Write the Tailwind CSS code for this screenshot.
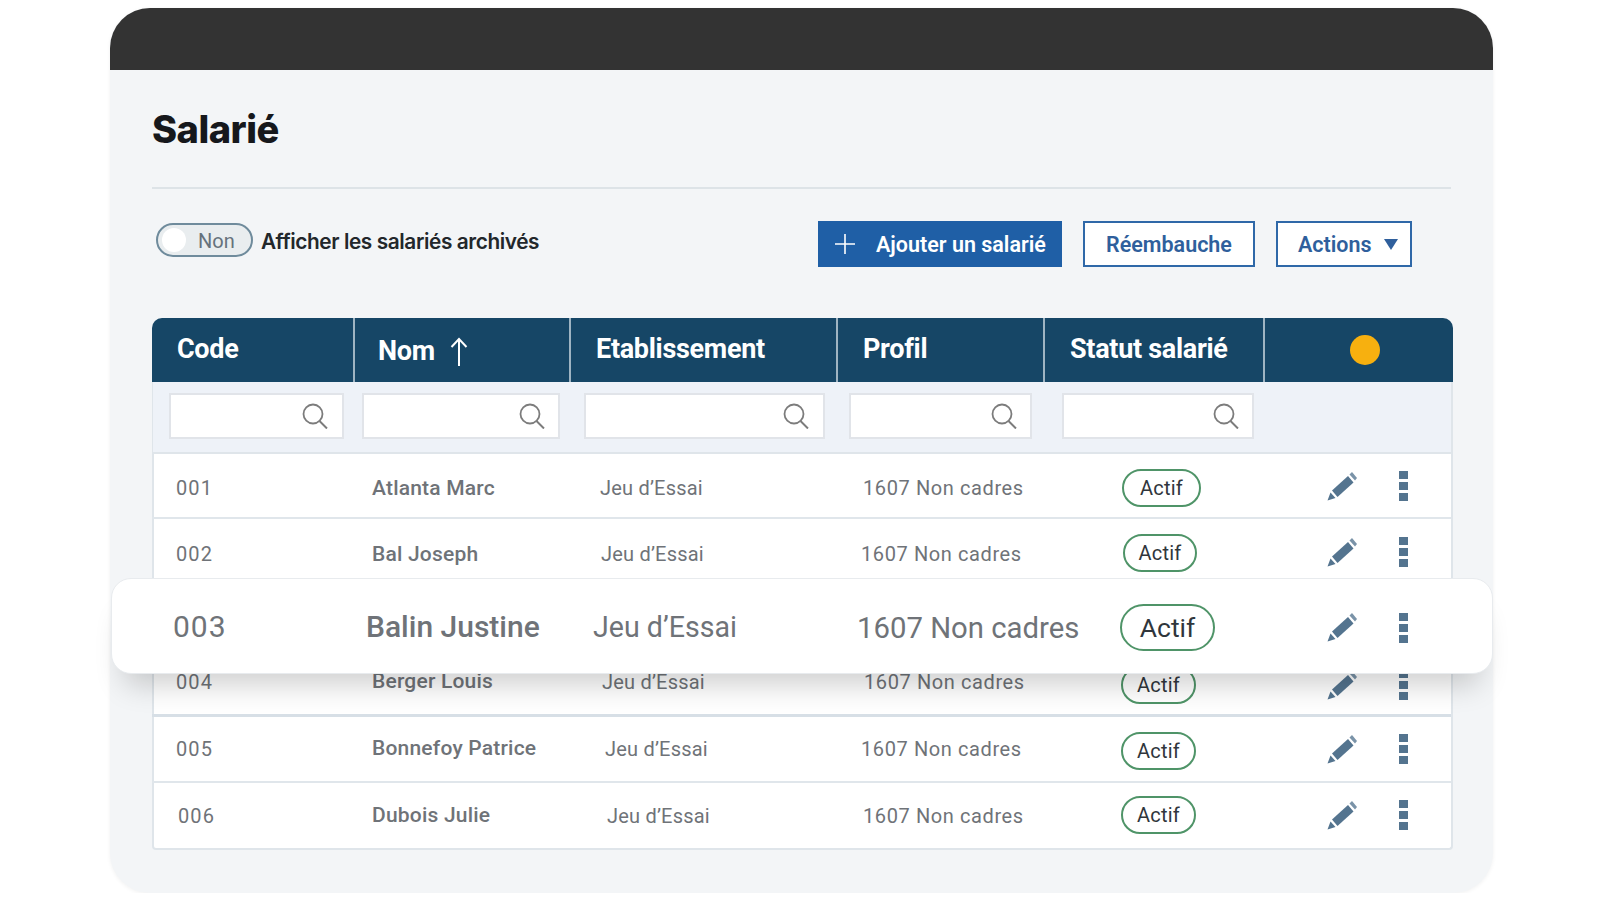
<!DOCTYPE html>
<html lang="fr">
<head>
    <meta charset="UTF-8">
    <title>Salarié</title>
    <script src="https://cdn.jsdelivr.net/npm/@tailwindcss/browser@4"></script>
</head>
<body class="bg-white font-['Roboto',sans-serif] overflow-hidden">
    <!-- Icons -->
    <svg class="hidden">
        <symbol id="pencil" viewBox="0 0 30 30">
            <polygon points="5,19.5 21,5 26.5,11.5 10.5,26" fill="#54748f"/>
            <polygon points="0.5,29.5 3.5,21.5 8.5,27" fill="#54748f"/>
            <polygon points="22.5,3.5 25,1 30,7 28,9.5" fill="#7a93a8"/>
        </symbol>
        <symbol id="search" viewBox="0 0 26 26">
            <circle cx="11" cy="11" r="9.5" fill="none" stroke="#7c7c7c" stroke-width="1.8"/>
            <line x1="17.5" y1="18" x2="25" y2="25.5" stroke="#7c7c7c" stroke-width="2"/>
        </symbol>
    </svg>

    <div class="relative mt-[8px] ml-[110px] w-[1383px] h-[885px] rounded-[40px] bg-[#f3f5f7] shadow-[0_1px_4px_rgba(0,0,0,0.06)]">
        <!-- Top bar -->
        <div class="h-[62px] rounded-t-[40px] bg-[#333333]"></div>

        <div class="px-[42px]">
            <h1 class="h-[119px] pt-[33px] font-['Inter',sans-serif] text-[38px] leading-[52px] font-extrabold tracking-[-0.5px] text-[#16181c] border-b-2 border-[#dde3e7]">Salarié</h1>

            <!-- Toolbar -->
            <div class="flex items-start justify-between h-[129px] pr-[39px]">
                <div class="flex items-center mt-[33px] ml-[4px]">
                    <div class="relative w-[97px] h-[34px] rounded-full border-2 border-[#6f8b9c] bg-[#e9edef] pl-[40px] pt-[3px] flex items-center text-[20px] text-[#66727c]">
                        Non
                        <span class="absolute left-[4px] top-[3px] w-[24px] h-[24px] rounded-full bg-white"></span>
                    </div>
                    <span class="ml-[8px] pt-[4px] font-['Inter',sans-serif] text-[20.8px] font-semibold tracking-[-0.4px] text-[#22272b]">Afficher les salariés archivés</span>
                </div>
                <div class="flex gap-[21px] mt-[32px] text-[21.5px] font-semibold">
                    <button class="flex items-center w-[244px] h-[46px] bg-[#1f5fa6] text-white pl-[17px]">
                        <svg class="w-[20px] h-[20px] mr-[21px]" viewBox="0 0 20 20"><path d="M10 0V20M0 10H20" stroke="#fff" stroke-width="1.6"/></svg>
                        <span class="pt-[3px]">Ajouter un salarié</span>
                    </button>
                    <button class="w-[172px] h-[46px] pt-[3px] bg-white border-2 border-[#2f68a8] text-[#2f5f9c]">Réembauche</button>
                    <button class="flex items-center w-[136px] h-[46px] bg-white border-2 border-[#2f68a8] text-[#2f5f9c] pl-[20px]">
                        <span class="pt-[3px]">Actions</span>
                        <svg class="w-[14px] h-[11px] ml-[12px]" viewBox="0 0 14 11"><polygon points="0,0 14,0 7,11" fill="#2f5f9c"/></svg>
                    </button>
                </div>
            </div>

            <!-- Table -->
            <div class="w-[1301px] h-[532px] rounded-t-[10px] rounded-b-[4px] bg-white border-x-2 border-b-2 border-[#dfe5ea]">
                <div class="grid grid-cols-[203px_216px_267px_207px_220px_184px] h-[64px] -mx-[2px] w-[1301px] rounded-t-[10px] bg-[#164666] text-white text-[27px] font-bold tracking-[-0.3px] items-center">
                    <div class="h-full flex items-center pl-[25px] pb-[2px] border-r-2 border-[#9fb4c2]">Code</div>
                    <div class="h-full flex items-center pl-[23px] pt-[3px] border-r-2 border-[#9fb4c2]">Nom
                        <svg class="w-[18px] h-[30px] ml-[15px]" viewBox="0 0 18 30"><path d="M9 29V2M1.5 10L9 2l7.5 8" fill="none" stroke="#fff" stroke-width="2"/></svg>
                    </div>
                    <div class="h-full flex items-center pl-[25px] pb-[2px] border-r-2 border-[#9fb4c2]">Etablissement</div>
                    <div class="h-full flex items-center pl-[25px] pb-[2px] border-r-2 border-[#9fb4c2]">Profil</div>
                    <div class="h-full flex items-center pl-[25px] pb-[2px] border-r-2 border-[#9fb4c2]">Statut salarié</div>
                    <div class="h-full flex items-center pl-[85px]"><span class="w-[30px] h-[30px] rounded-full bg-[#f7b00f]"></span></div>
                </div>

                <!-- Filters -->
                <div class="flex h-[72px] pt-[11px] -ml-[1px] bg-[#eef2f8] border-b-2 border-[#dfe5ea]">
                    <div class="flex items-center justify-end ml-[16px] w-[175px] h-[46px] pr-[14px] bg-white border-2 border-[#e1e4e9]"><svg class="w-[26px] h-[26px]"><use href="#search"/></svg></div>
                    <div class="flex items-center justify-end ml-[18px] w-[198px] h-[46px] pr-[13px] bg-white border-2 border-[#e1e4e9]"><svg class="w-[26px] h-[26px]"><use href="#search"/></svg></div>
                    <div class="flex items-center justify-end ml-[24px] w-[241px] h-[46px] pr-[14px] bg-white border-2 border-[#e1e4e9]"><svg class="w-[26px] h-[26px]"><use href="#search"/></svg></div>
                    <div class="flex items-center justify-end ml-[24px] w-[183px] h-[46px] pr-[13px] bg-white border-2 border-[#e1e4e9]"><svg class="w-[26px] h-[26px]"><use href="#search"/></svg></div>
                    <div class="flex items-center justify-end ml-[30px] w-[192px] h-[46px] pr-[13px] bg-white border-2 border-[#e1e4e9]"><svg class="w-[26px] h-[26px]"><use href="#search"/></svg></div>
                </div>

                <!-- Rows -->
                <div class="text-[20px] text-[#6f7378] tracking-[0.2px]">
                    <div class="grid grid-cols-[202px_216px_267px_207px_220px_185px] items-center h-[65px] -ml-[2px] border-b-2 border-[#e0e6eb]">
                        <div class="pl-[24px] pt-[4px] tracking-[1.1px]">001</div>
                        <div class="pl-[18px] pt-[6px] text-[21px] font-medium">Atlanta Marc</div>
                        <div class="pl-[30px] pt-[4px]">Jeu d’Essai</div>
                        <div class="pl-[26px] pt-[4px] tracking-[0.6px]">1607 Non cadres</div>
                        <div class="pl-[78px]"><span class="flex items-center justify-center w-[79px] h-[38px] mt-[4px] rounded-full border-2 border-[#4f9468] text-[#30363c]">Actif</span></div>
                        <div class="flex items-center pl-[63px]"><svg class="w-[30px] h-[30px]"><use href="#pencil"/></svg><span class="flex flex-col gap-[3px] ml-[42px]"><i class="w-[9px] h-[8px] bg-[#54748f]"></i><i class="w-[9px] h-[8px] bg-[#54748f]"></i><i class="w-[9px] h-[8px] bg-[#54748f]"></i></span></div>
                    </div>
                    <div class="grid grid-cols-[202px_216px_267px_207px_220px_185px] items-center h-[65px] -ml-[2px] border-b-2 border-[#e0e6eb]">
                        <div class="pl-[24px] pt-[6px] tracking-[1.1px]">002</div>
                        <div class="pl-[18px] pt-[8px] text-[21px] font-medium">Bal Joseph</div>
                        <div class="pl-[31px] pt-[6px]">Jeu d’Essai</div>
                        <div class="pl-[24px] pt-[6px] tracking-[0.6px]">1607 Non cadres</div>
                        <div class="pl-[79px]"><span class="flex items-center justify-center w-[74px] h-[38px] mt-[4px] rounded-full border-2 border-[#4f9468] text-[#30363c]">Actif</span></div>
                        <div class="flex items-center pl-[63px] mt-[2px]"><svg class="w-[30px] h-[30px]"><use href="#pencil"/></svg><span class="flex flex-col gap-[3px] ml-[42px]"><i class="w-[9px] h-[8px] bg-[#54748f]"></i><i class="w-[9px] h-[8px] bg-[#54748f]"></i><i class="w-[9px] h-[8px] bg-[#54748f]"></i></span></div>
                    </div>
                    <div class="h-[66px] border-b-2 border-[#e0e6eb]"></div>
                    <div class="grid grid-cols-[202px_216px_267px_207px_220px_185px] items-center h-[67px] -ml-[2px] border-b-[3px] border-[#d7dfe6]">
                        <div class="pl-[24px] tracking-[1.1px]">004</div>
                        <div class="pl-[18px] text-[21px] font-medium">Berger Louis</div>
                        <div class="pl-[32px]">Jeu d’Essai</div>
                        <div class="pl-[27px] tracking-[0.6px]">1607 Non cadres</div>
                        <div class="pl-[77px]"><span class="flex items-center justify-center w-[75px] h-[38px] rounded-full border-2 border-[#4f9468] text-[#30363c] mt-[6px]">Actif</span></div>
                        <div class="flex items-center pl-[63px] mt-[6px]"><svg class="w-[30px] h-[30px]"><use href="#pencil"/></svg><span class="flex flex-col gap-[3px] ml-[42px]"><i class="w-[9px] h-[8px] bg-[#54748f]"></i><i class="w-[9px] h-[8px] bg-[#54748f]"></i><i class="w-[9px] h-[8px] bg-[#54748f]"></i></span></div>
                    </div>
                    <div class="grid grid-cols-[202px_216px_267px_207px_220px_185px] items-center h-[66px] -ml-[2px] border-b-2 border-[#e0e6eb]">
                        <div class="pl-[24px] tracking-[1.1px]">005</div>
                        <div class="pl-[18px] text-[21px] font-medium">Bonnefoy Patrice</div>
                        <div class="pl-[35px]">Jeu d’Essai</div>
                        <div class="pl-[24px] tracking-[0.6px]">1607 Non cadres</div>
                        <div class="pl-[77px]"><span class="flex items-center justify-center w-[75px] h-[38px] rounded-full border-2 border-[#4f9468] text-[#30363c] mt-[4px]">Actif</span></div>
                        <div class="flex items-center pl-[63px]"><svg class="w-[30px] h-[30px]"><use href="#pencil"/></svg><span class="flex flex-col gap-[3px] ml-[42px]"><i class="w-[9px] h-[8px] bg-[#54748f]"></i><i class="w-[9px] h-[8px] bg-[#54748f]"></i><i class="w-[9px] h-[8px] bg-[#54748f]"></i></span></div>
                    </div>
                    <div class="grid grid-cols-[202px_216px_267px_207px_220px_185px] items-center h-[65px] -ml-[2px]">
                        <div class="pl-[26px] tracking-[1.1px]">006</div>
                        <div class="pl-[18px] text-[21px] font-medium">Dubois Julie</div>
                        <div class="pl-[37px]">Jeu d’Essai</div>
                        <div class="pl-[26px] tracking-[0.6px]">1607 Non cadres</div>
                        <div class="pl-[77px]"><span class="flex items-center justify-center w-[75px] h-[38px] -mt-[2px] rounded-full border-2 border-[#4f9468] text-[#30363c]">Actif</span></div>
                        <div class="flex items-center pl-[63px] -mt-[2px]"><svg class="w-[30px] h-[30px]"><use href="#pencil"/></svg><span class="flex flex-col gap-[3px] ml-[42px]"><i class="w-[9px] h-[8px] bg-[#54748f]"></i><i class="w-[9px] h-[8px] bg-[#54748f]"></i><i class="w-[9px] h-[8px] bg-[#54748f]"></i></span></div>
                    </div>
                </div>
            </div>
        </div>

        <!-- Highlighted row floating over the table -->
        <div class="absolute left-[1px] top-[570px] w-[1382px] h-[96px] rounded-[20px] bg-white border border-[#e8ebee] shadow-[0_24px_30px_-14px_rgba(0,0,0,0.2)] flex items-center text-[#6f7378]">
            <span class="absolute left-[61px] text-[30px] tracking-[1px]">003</span>
            <span class="absolute left-[254px] text-[30px] font-medium">Balin Justine</span>
            <span class="absolute left-[481px] pt-[2px] text-[28.6px]">Jeu d’Essai</span>
            <span class="absolute left-[745px] pt-[5px] text-[29.3px]">1607 Non cadres</span>
            <span class="absolute left-[1008px] top-[25px] flex items-center justify-center w-[95px] h-[47px] rounded-full border-2 border-[#4f9468] text-[#30363c] text-[26.5px]">Actif</span>
            <svg class="absolute left-[1215px] top-[33px] w-[30px] h-[30px]"><use href="#pencil"/></svg>
            <span class="absolute left-[1287px] top-[34px] flex flex-col gap-[3px]"><i class="w-[9px] h-[8px] bg-[#54748f]"></i><i class="w-[9px] h-[8px] bg-[#54748f]"></i><i class="w-[9px] h-[8px] bg-[#54748f]"></i></span>
        </div>
    </div>
</body>
</html>
